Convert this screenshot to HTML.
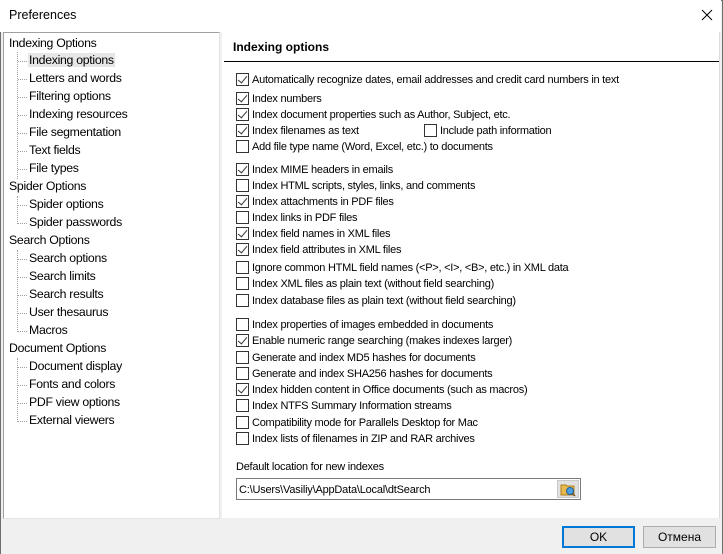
<!DOCTYPE html>
<html><head><meta charset="utf-8"><style>
*{margin:0;padding:0;box-sizing:border-box}
body{width:723px;height:554px;background:#f0f0f0;font-family:"Liberation Sans",sans-serif;position:relative;overflow:hidden;color:#000}
.win{position:absolute;left:0;top:0;width:723px;height:554px;border:1px solid #6e6e6e;border-bottom:none}
.title{position:absolute;left:0;top:0;width:721px;height:32px;background:#fff}
.title span{position:absolute;left:9px;top:8px;font-size:12.5px}
.close{position:absolute;left:701px;top:9px}
.tree{position:absolute;left:3px;top:32px;width:217px;height:487px;background:#fff;border:1px solid #a0a0a0;border-right-color:#e3e3e3;border-bottom-color:#e3e3e3}
.ti{position:absolute;font-size:12.3px;white-space:nowrap;letter-spacing:-0.3px}
.sel{background:#e6e6e6}
.vline{position:absolute;border-left:1px dotted #a0a0a0;left:13px}
.hline{position:absolute;border-top:1px dotted #a0a0a0;left:14px;width:9px}
.panel{position:absolute;left:222px;top:32px;width:498px;height:486px;background:#fff;border-right:1px solid #dcdcdc}
.hdr{position:absolute;left:11px;top:8px;font-size:12px;font-weight:bold}
.hr{position:absolute;left:2px;top:29px;width:495px;height:1px;background:#000}
.cb{position:absolute;left:14px;width:13px;height:13px;border:1px solid #333;background:#fff}
.cb.c::after{content:"";position:absolute;left:3px;top:0px;width:4px;height:8px;border-right:1.3px solid #333;border-bottom:1.3px solid #333;transform:rotate(40deg)}
.lb{position:absolute;left:30px;font-size:11px;letter-spacing:-0.25px;white-space:nowrap;margin-top:1px}
.inp{position:absolute;left:14px;top:446px;width:345px;height:22px;border:1px solid #7a7a7a;background:#fff}
.inp span{position:absolute;left:2px;top:5px;font-size:11px;letter-spacing:-0.2px}
.fb{position:absolute;left:320px;top:1px;width:22px;height:18px;background:#e1e1e1;border:1px solid #c8c8c8}
.btn{position:absolute;top:526px;width:73px;height:22px;background:#e1e1e1;border:1px solid #adadad;font-size:12px;text-align:center;line-height:20px}
.btn.ok{border:2px solid #0078d7;line-height:19px}
</style></head><body>
<div class="win"></div>
<div class="title"><span>Preferences</span>
<svg class="close" width="12" height="12" viewBox="0 0 12 12"><path d="M1 1L11 11M11 1L1 11" stroke="#000" stroke-width="1"/></svg></div>

<div class="tree">
<div class="vline" style="top:19px;height:127px"></div>
<div class="vline" style="top:163px;height:28px"></div>
<div class="vline" style="top:217px;height:82px"></div>
<div class="vline" style="top:325px;height:64px"></div>
<div class="ti" style="left:5px;top:3px">Indexing Options</div>
<div class="hline" style="top:28px"></div><div class="ti sel" style="left:24px;top:20px;padding:0 1px">Indexing options</div>
<div class="hline" style="top:46px"></div><div class="ti" style="left:25px;top:38px">Letters and words</div>
<div class="hline" style="top:64px"></div><div class="ti" style="left:25px;top:56px">Filtering options</div>
<div class="hline" style="top:82px"></div><div class="ti" style="left:25px;top:74px">Indexing resources</div>
<div class="hline" style="top:100px"></div><div class="ti" style="left:25px;top:92px">File segmentation</div>
<div class="hline" style="top:118px"></div><div class="ti" style="left:25px;top:110px">Text fields</div>
<div class="hline" style="top:136px"></div><div class="ti" style="left:25px;top:128px">File types</div>
<div class="ti" style="left:5px;top:146px">Spider Options</div>
<div class="hline" style="top:172px"></div><div class="ti" style="left:25px;top:164px">Spider options</div>
<div class="hline" style="top:190px"></div><div class="ti" style="left:25px;top:182px">Spider passwords</div>
<div class="ti" style="left:5px;top:200px">Search Options</div>
<div class="hline" style="top:226px"></div><div class="ti" style="left:25px;top:218px">Search options</div>
<div class="hline" style="top:244px"></div><div class="ti" style="left:25px;top:236px">Search limits</div>
<div class="hline" style="top:262px"></div><div class="ti" style="left:25px;top:254px">Search results</div>
<div class="hline" style="top:280px"></div><div class="ti" style="left:25px;top:272px">User thesaurus</div>
<div class="hline" style="top:298px"></div><div class="ti" style="left:25px;top:290px">Macros</div>
<div class="ti" style="left:5px;top:308px">Document Options</div>
<div class="hline" style="top:334px"></div><div class="ti" style="left:25px;top:326px">Document display</div>
<div class="hline" style="top:352px"></div><div class="ti" style="left:25px;top:344px">Fonts and colors</div>
<div class="hline" style="top:370px"></div><div class="ti" style="left:25px;top:362px">PDF view options</div>
<div class="hline" style="top:388px"></div><div class="ti" style="left:25px;top:380px">External viewers</div>
</div>

<div class="panel">
<div class="hdr">Indexing options</div>
<div class="hr"></div>
<div class="cb c" style="top:41px"></div><div class="lb" style="top:41px">Automatically recognize dates, email addresses and credit card numbers in text</div>
<div class="cb c" style="top:60px"></div><div class="lb" style="top:60px">Index numbers</div>
<div class="cb c" style="top:76px"></div><div class="lb" style="top:76px">Index document properties such as Author, Subject, etc.</div>
<div class="cb c" style="top:92px"></div><div class="lb" style="top:92px">Index filenames as text</div>
<div class="cb" style="top:92px;left:202px"></div><div class="lb" style="top:92px;left:218px">Include path information</div>
<div class="cb" style="top:108px"></div><div class="lb" style="top:108px">Add file type name (Word, Excel, etc.) to documents</div>
<div class="cb c" style="top:131px"></div><div class="lb" style="top:131px">Index MIME headers in emails</div>
<div class="cb" style="top:147px"></div><div class="lb" style="top:147px">Index HTML scripts, styles, links, and comments</div>
<div class="cb c" style="top:163px"></div><div class="lb" style="top:163px">Index attachments in PDF files</div>
<div class="cb" style="top:179px"></div><div class="lb" style="top:179px">Index links in PDF files</div>
<div class="cb c" style="top:195px"></div><div class="lb" style="top:195px">Index field names in XML files</div>
<div class="cb c" style="top:211px"></div><div class="lb" style="top:211px">Index field attributes in XML files</div>
<div class="cb" style="top:229px"></div><div class="lb" style="top:229px">Ignore common HTML field names (&lt;P&gt;, &lt;I&gt;, &lt;B&gt;, etc.) in XML data</div>
<div class="cb" style="top:245px"></div><div class="lb" style="top:245px">Index XML files as plain text (without field searching)</div>
<div class="cb" style="top:262px"></div><div class="lb" style="top:262px">Index database files as plain text (without field searching)</div>
<div class="cb" style="top:286px"></div><div class="lb" style="top:286px">Index properties of images embedded in documents</div>
<div class="cb c" style="top:302px"></div><div class="lb" style="top:302px">Enable numeric range searching (makes indexes larger)</div>
<div class="cb" style="top:319px"></div><div class="lb" style="top:319px">Generate and index MD5 hashes for documents</div>
<div class="cb" style="top:335px"></div><div class="lb" style="top:335px">Generate and index SHA256 hashes for documents</div>
<div class="cb c" style="top:351px"></div><div class="lb" style="top:351px">Index hidden content in Office documents (such as macros)</div>
<div class="cb" style="top:367px"></div><div class="lb" style="top:367px">Index NTFS Summary Information streams</div>
<div class="cb" style="top:384px"></div><div class="lb" style="top:384px">Compatibility mode for Parallels Desktop for Mac</div>
<div class="cb" style="top:400px"></div><div class="lb" style="top:400px">Index lists of filenames in ZIP and RAR archives</div>
<div class="lb" style="top:428px;left:14px">Default location for new indexes</div>
<div class="inp"><span>C:\Users\Vasiliy\AppData\Local\dtSearch</span>
<div class="fb"><svg width="20" height="16" viewBox="0 0 20 16"><path d="M3 4h5l1 1h7v9H3z" fill="#e8b84a" stroke="#b08020"/><circle cx="12" cy="10" r="3.5" fill="#4aa0e0" stroke="#2060a0"/><path d="M14.5 12.5l2.5 2.5" stroke="#705020" stroke-width="1.5"/></svg></div></div>
</div>

<div class="btn ok" style="left:562px">OK</div>
<div class="btn" style="left:643px">Отмена</div>
</body></html>
